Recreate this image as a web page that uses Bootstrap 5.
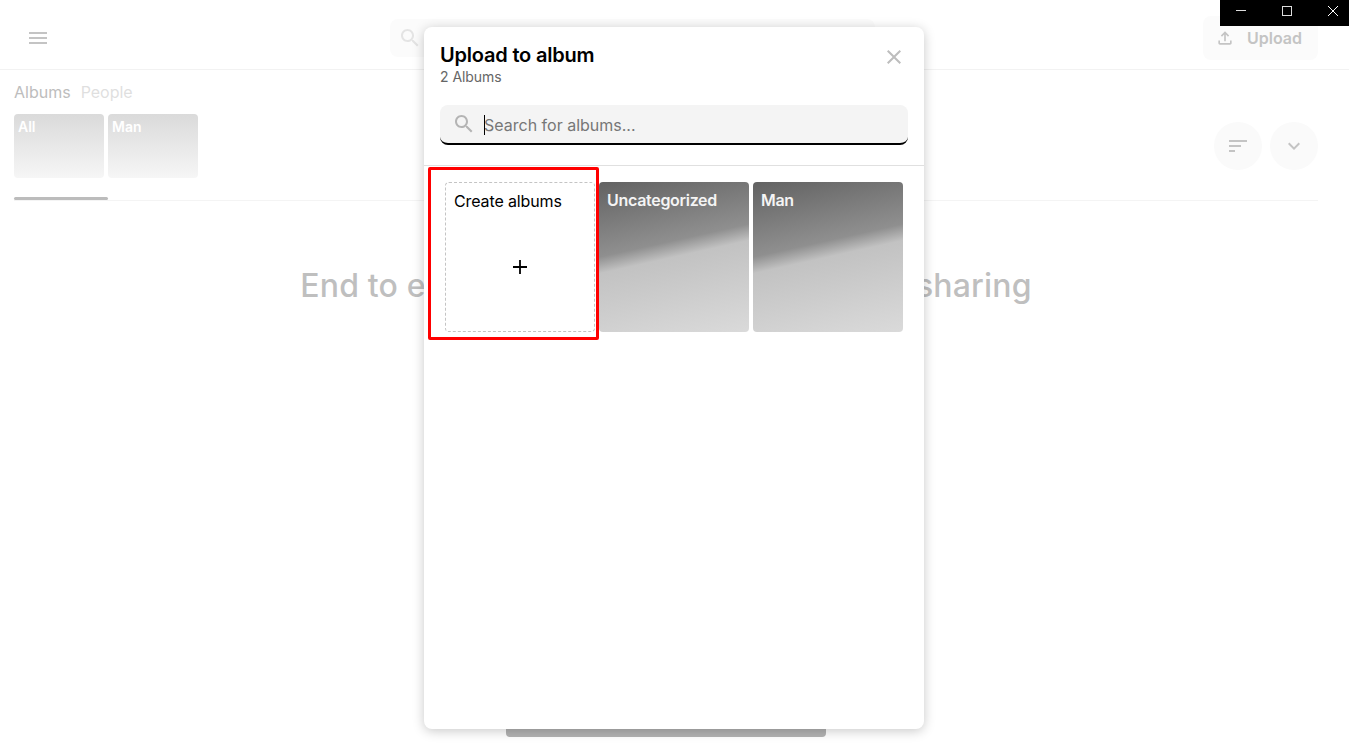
<!DOCTYPE html>
<html lang="en">
<head>
<meta charset="utf-8">
<title>Upload to album</title>
<link href="https://cdn.jsdelivr.net/npm/bootstrap@5.3.0/dist/css/bootstrap.min.css" rel="stylesheet">
<style>
html,body{height:100%;overflow:hidden;background:#fff;font-family:Inter,"Liberation Sans",sans-serif}
.page-shell{height:743px}
.top-bar{height:70px;border-bottom:1px solid #f2f2f2;padding:6px 31px 0 26px}
.top-search{width:485px;height:38px;background:#fbfbfb;border-radius:8px;margin-left:340px;padding-left:8px}
.upload-btn{width:115px;height:44px;background:#fbfbfb;border-radius:8px;color:#c4c4c4;font-size:16px;font-weight:600;gap:12px;padding-left:12px}
.main-area{padding:0 31px 6px 14px}
.tab-row{height:44px;gap:10px;font-size:16px;padding-top:12px;line-height:20px}
.tab-on{color:#bdbdbd}.tab-off{color:#dfdfdf}
.thumbs-row{height:87px;border-bottom:1px solid #f4f4f4}
.mini-card{width:90px;height:64px;border-radius:4px;background:linear-gradient(#dadada,#f6f6f6);color:#fff;font-size:14px;font-weight:600;padding:3px 4px;line-height:20px}
.tab-mark{left:0;bottom:0;width:94px;height:3px;background:#bcbcbc;border-radius:2px}
.round-btn{width:48px;height:48px;border-radius:50%;background:#fafafa;margin-top:8px}
.hero-line{font-size:32px;font-weight:500;color:#bfbfbf;margin-top:65px;line-height:40px;white-space:nowrap;letter-spacing:.16px}
.ghost-btn{width:320px;height:48px;background:#b3b3b3;border-radius:4px}
.win-bar{top:0;right:0;width:129px;height:26px;background:#000;z-index:20;padding-top:5px}
.win-slot{width:46px;flex:none;height:12px}
.win-slot:first-child{margin-left:-2px}
.modal-layer{inset:0;padding:27px 1px 0 0;z-index:10}
.sheet{width:500px;height:702px;background:#fff;border-radius:8px;box-shadow:0 2px 12px rgba(0,0,0,.22)}
.sheet-head{padding:16px 18px 0 16px;height:78px}
.sheet-title{font-size:20px;font-weight:600;line-height:24px;color:#000;margin:0;letter-spacing:-.2px}
.sheet-sub{font-size:14px;line-height:20px;color:#666;letter-spacing:-.05px}
.sheet-close{background:none;border:0;padding:0}
.find-wrap{margin:0 16px;height:40px;background:#f4f4f4;border-radius:8px;border-bottom:2px solid #000;padding-left:12px;gap:8px}
.find-input{background:transparent;border:0;outline:0;flex:1;font-size:16px;color:#000;height:38px;padding:2px 0 0;font-family:inherit}
.find-input::placeholder{color:#777;opacity:1}
.find-caret{left:44px;top:10px;width:1px;height:20px;background:#000}
.sheet-rule{height:1px;background:#e0e0e0;margin-top:20px}
.album-grid{display:grid;grid-template-columns:repeat(3,150px);gap:4px;padding:16px 0 0 21px}
.album-tile{height:150px;border-radius:4px;color:#f4f4f4;font-size:16px;font-weight:600;letter-spacing:-.3px;padding:8px;line-height:20px;background:linear-gradient(167.5deg,#626262 0%,#8f8f8f 41%,#c2c2c2 50%,#dadada 100%)}
.album-new{height:150px;border:1px dashed #c4c4c4;border-radius:4px;color:#000;font-size:16px;font-weight:400;letter-spacing:-.12px;padding:8px;line-height:20px;background:#fff}
.plus-mark{margin-top:44px}
.red-frame{left:4px;top:140px;width:171px;height:173px;border:3px solid #f00;border-radius:2px;pointer-events:none}
</style>
</head>
<body>
<div class="page-shell d-flex flex-column">
  <header class="top-bar d-flex align-items-center">
    <svg width="24" height="24" viewBox="0 0 24 24" fill="#c4c4c4"><path d="M3 18h18v-2H3v2zm0-5h18v-2H3v2zm0-7v2h18V6H3z"/></svg>
    <div class="top-search d-flex align-items-center">
      <svg width="24" height="24" viewBox="0 0 24 24" fill="#e4e4e4"><path d="M15.5 14h-.79l-.28-.27C15.41 12.59 16 11.11 16 9.5 16 5.91 13.09 3 9.5 3S3 5.91 3 9.5 5.91 16 9.5 16c1.61 0 3.09-.59 4.23-1.57l.27.28v.79l5 4.99L20.49 19l-4.99-5zm-6 0C7.01 14 5 11.99 5 9.5S7.01 5 9.5 5 14 7.01 14 9.5 11.99 14 9.5 14z"/></svg>
    </div>
    <div class="upload-btn d-flex align-items-center ms-auto">
      <svg width="20" height="20" viewBox="0 0 24 24" fill="#c4c4c4"><path d="M18 15v3H6v-3H4v3c0 1.1.9 2 2 2h12c1.1 0 2-.9 2-2v-3h-2zM7 9l1.41 1.41L11 7.83V16h2V7.83l2.59 2.58L17 9l-5-5-5 5z"/></svg>
      <span>Upload</span>
    </div>
  </header>
  <main class="main-area d-flex flex-column flex-grow-1">
    <div class="tab-row d-flex"><span class="tab-on">Albums</span><span class="tab-off">People</span></div>
    <div class="thumbs-row position-relative d-flex justify-content-between">
      <div class="d-flex gap-1">
        <div class="mini-card">All</div>
        <div class="mini-card">Man</div>
      </div>
      <div class="d-flex gap-2">
        <div class="round-btn d-flex align-items-center justify-content-center">
          <svg width="24" height="24" viewBox="0 0 24 24" fill="#c4c4c4"><path d="M3 6h18v2H3zM3 11h12v2H3zM3 16h6v2H3z"/></svg>
        </div>
        <div class="round-btn d-flex align-items-center justify-content-center">
          <svg width="24" height="24" viewBox="0 0 24 24" fill="#c4c4c4"><path d="M16.59 8.59 12 13.17 7.41 8.59 6 10l6 6 6-6z"/></svg>
        </div>
      </div>
      <div class="tab-mark position-absolute"></div>
    </div>
    <div class="hero-line text-center">End to end encrypted photos and video sharing</div>
    <div class="ghost-btn mt-auto mx-auto"></div>
  </main>
</div>

<div class="modal-layer position-absolute d-flex justify-content-center align-items-start">
  <section class="sheet position-relative">
    <div class="sheet-head d-flex justify-content-between align-items-start">
      <div>
        <h2 class="sheet-title">Upload to album</h2>
        <div class="sheet-sub">2 Albums</div>
      </div>
      <button class="sheet-close" type="button" aria-label="Close">
        <svg width="24" height="24" viewBox="0 0 24 24" fill="#bdbdbd"><path d="M19 6.41 17.59 5 12 10.59 6.41 5 5 6.41 10.59 12 5 17.59 6.41 19 12 13.41 17.59 19 19 17.59 13.41 12z"/></svg>
      </button>
    </div>
    <div class="find-wrap position-relative d-flex align-items-center">
      <svg width="24" height="24" viewBox="0 0 24 24" fill="#b4b4b4" class="flex-shrink-0"><path d="M15.5 14h-.79l-.28-.27C15.41 12.59 16 11.11 16 9.5 16 5.91 13.09 3 9.5 3S3 5.91 3 9.5 5.91 16 9.5 16c1.61 0 3.09-.59 4.23-1.57l.27.28v.79l5 4.99L20.49 19l-4.99-5zm-6 0C7.01 14 5 11.99 5 9.5S7.01 5 9.5 5 14 7.01 14 9.5 11.99 14 9.5 14z"/></svg>
      <input class="find-input" type="text" placeholder="Search for albums...">
      <span class="find-caret position-absolute"></span>
    </div>
    <div class="sheet-rule"></div>
    <div class="album-grid">
      <div class="album-new">
        <div>Create albums</div>
        <div class="plus-mark text-center">
          <svg width="16" height="16" viewBox="0 0 16 16" stroke="#000" stroke-width="1.8" fill="none"><path d="M8 1v14M1 8h14"/></svg>
        </div>
      </div>
      <div class="album-tile">Uncategorized</div>
      <div class="album-tile">Man</div>
    </div>
    <div class="red-frame position-absolute"></div>
  </section>
</div>

<div class="win-bar position-absolute d-flex text-white">
  <div class="win-slot d-flex justify-content-center"><svg width="12" height="12" viewBox="0 0 12 12" stroke="#ddd" fill="none"><path d="M1 5.5h10"/></svg></div>
  <div class="win-slot d-flex justify-content-center"><svg width="12" height="12" viewBox="0 0 12 12" stroke="#ddd" fill="none"><rect x="1.5" y="1.5" width="9" height="9"/></svg></div>
  <div class="win-slot d-flex justify-content-center"><svg width="12" height="12" viewBox="0 0 12 12" stroke="#fff" fill="none"><path d="M1 1l10 10M11 1L1 11"/></svg></div>
</div>
<script src="https://cdn.jsdelivr.net/npm/bootstrap@5.3.0/dist/js/bootstrap.bundle.min.js"></script>
</body>
</html>
